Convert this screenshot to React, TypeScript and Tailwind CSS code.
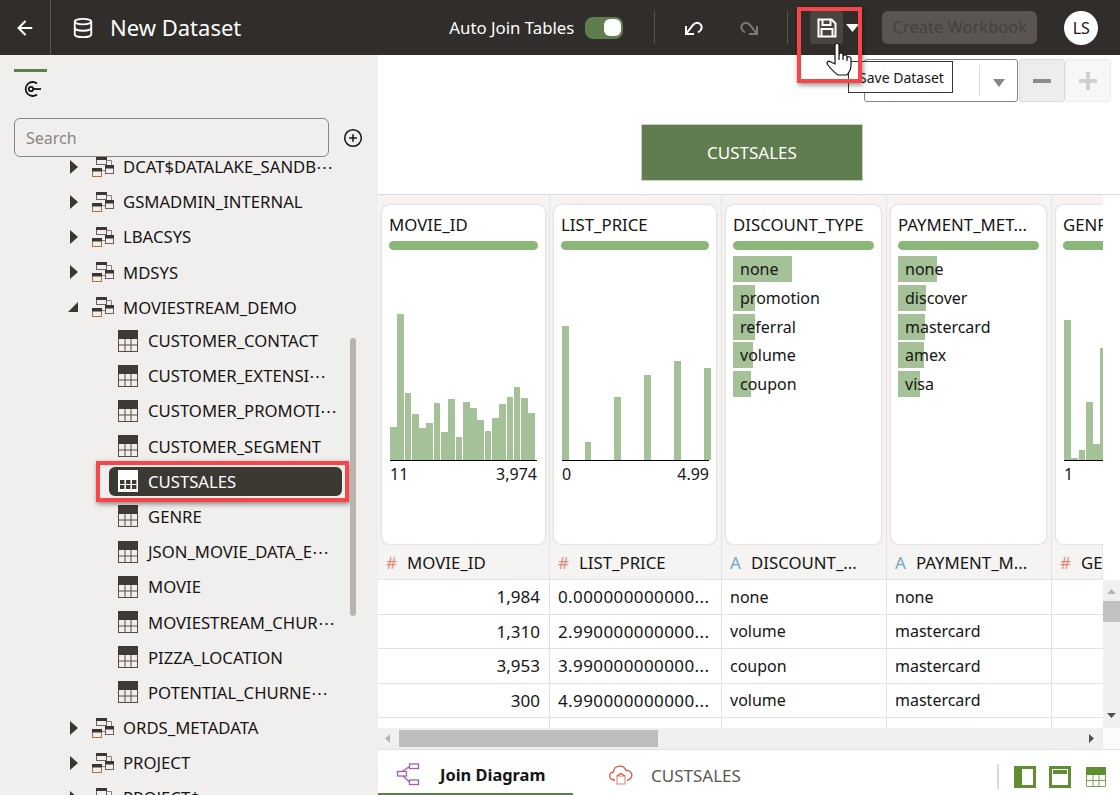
import { ArrowLeft, CirclePlus, Database } from 'lucide-react';

const cols = ['w-[172px]', 'w-[172px]', 'w-[165px]', 'w-[165px]', 'w-[51px]'];

const movieBars = [33, 146, 67, 46, 32, 37, 57, 28, 61, 23, 58, 52, 40, 29, 42, 56, 63, 73, 62, 47];
const priceBars = [134, 18, 63, 85, 99, 92];
const priceGaps = [0, 15.3, 22.6, 22.3, 22.6, 22.7];
const genreBars = [140, 2, 10, 58, 16, 112];

const discounts = [
  { label: 'none', w: 59 },
  { label: 'promotion', w: 22 },
  { label: 'referral', w: 22 },
  { label: 'volume', w: 20 },
  { label: 'coupon', w: 18 },
];
const payments = [
  { label: 'none', w: 39 },
  { label: 'discover', w: 28 },
  { label: 'mastercard', w: 27 },
  { label: 'amex', w: 26 },
  { label: 'visa', w: 22 },
];

const rows = [
  ['1,984', '0.000000000000...', 'none', 'none'],
  ['1,310', '2.990000000000...', 'volume', 'mastercard'],
  ['3,953', '3.990000000000...', 'coupon', 'mastercard'],
  ['300', '4.990000000000...', 'volume', 'mastercard'],
  ['', '', 'referral', 'none'],
];

function SchemaIcon() {
  return (
    <svg width="24" height="22" viewBox="0 0 24 22" className="shrink-0">
      <path d="M16 4.500h4.500V9" fill="none" stroke="#8a7f86" strokeWidth="1" />
      <rect x="5.500" y="1.500" width="10" height="7" fill="#f1efed" stroke="#6b5f66" />
      <rect x="5" y="1" width="11" height="3" fill="#3a3632" />
      <rect x="14.500" y="9.500" width="8" height="8" fill="#f1efed" stroke="#6b5f66" />
      <rect x="14" y="9" width="9" height="3.500" fill="#3a3632" />
      <rect x="1.500" y="12.500" width="9" height="8" fill="#f1efed" stroke="#a8743c" />
      <rect x="1" y="12" width="10" height="3.500" fill="#3a3632" />
      <path d="M11 14.500h3" stroke="#8a7f86" strokeWidth="1" />
    </svg>
  );
}

function TableIcon({ selected }: { selected?: boolean }) {
  const line = '#5a4a44';
  return (
    <svg width="20" height="22" viewBox="0 0 20 22" className="shrink-0">
      <rect x="0" y="0" width="20" height="22" fill={selected ? '#ffffff' : '#f1efed'} />
      {selected ? (
        <g fill="#3c3932">
          {[10, 15].map((y) =>
            [2, 8, 14].map((x) => <rect key={`${x}-${y}`} x={x} y={y} width="4.400" height="4" />),
          )}
        </g>
      ) : (
        <>
          <rect x="0.500" y="0.500" width="19" height="21" fill="none" stroke={line} />
          <rect x="0" y="0" width="20" height="9" fill="#3f3a36" />
          <path d="M0 15h20M7 9v13M13 9v13" stroke={line} strokeWidth="1" />
        </>
      )}
    </svg>
  );
}

function Caret({ open }: { open?: boolean }) {
  if (open) {
    return (
      <svg width="10" height="10" viewBox="0 0 10 10" className="shrink-0">
        <path d="M10 0v10H0z" fill="#3a3632" />
      </svg>
    );
  }
  return (
    <svg width="8" height="14" viewBox="0 0 8 14" className="shrink-0">
      <path d="M0 0l8 7-8 7z" fill="#3a3632" />
    </svg>
  );
}

function SchemaRow({ name, open }: { name: string; open?: boolean }) {
  return (
    <div className={`flex h-[35.2px] shrink-0 items-center text-[16.7px] text-[#161513] ${open ? '-mb-[2px]' : ''}`}>
      <div className="flex w-[91px] justify-end pr-[13px]">
        <Caret open={open} />
      </div>
      <SchemaIcon />
      <span className="ml-[8px] whitespace-nowrap">{name}</span>
    </div>
  );
}

function TableRow({ name, selected }: { name: string; selected?: boolean }) {
  if (selected) {
    return (
      <div className="relative ml-[109px] mr-[36px] flex h-[35.2px] shrink-0 items-center">
        <div className="flex h-[29px] w-full items-center rounded-md bg-[#3c3932] pl-[9px] text-[16.7px] text-white">
          <TableIcon selected />
          <span className="ml-[10px]">{name}</span>
        </div>
        <div className="absolute -left-[13px] -right-[7px] top-[-3px] bottom-[-3px] border-4 border-[#f84548] shadow-[1px_2px_5px_rgba(0,0,0,0.45)]" />
      </div>
    );
  }
  return (
    <div className="flex h-[35.2px] shrink-0 items-center pl-[118px] text-[16.7px] text-[#161513]">
      <TableIcon />
      <span className="ml-[10px] whitespace-nowrap">{name}</span>
    </div>
  );
}

function Sidebar() {
  return (
    <aside className="relative flex h-full w-[378px] shrink-0 flex-col overflow-hidden bg-[#f1efed]">
      <div className="ml-[14px] mt-[14px] h-[3px] w-[33px] shrink-0 bg-[#5f7d4f]" />
      <div className="ml-[22px] mt-[7px] h-[20px] shrink-0">
        <svg width="20" height="20" viewBox="0 0 20 20" fill="none" stroke="#161513" strokeWidth="1.800">
          <path d="M15 4.500a7 7 0 1 0 0 11" />
          <circle cx="9" cy="10" r="2.200" />
          <path d="M11 10h8" />
        </svg>
      </div>
      <div className="relative z-10 ml-[14px] mt-[19px] flex shrink-0 items-center">
        <div className="flex h-[39px] w-[315px] items-center rounded-md border border-[#8a8580] bg-[#f1efed] pl-[11px] text-[16px] text-[#8a8580]">
          Search
        </div>
        <CirclePlus className="ml-[14px] text-[#161513]" size={20} strokeWidth={1.800} />
      </div>
      <div className="-mt-[8px] flex shrink-0 flex-col">
        <SchemaRow name="DCAT$DATALAKE_SANDB⋯" />
        <SchemaRow name="GSMADMIN_INTERNAL" />
        <SchemaRow name="LBACSYS" />
        <SchemaRow name="MDSYS" />
        <SchemaRow name="MOVIESTREAM_DEMO" open />
        <TableRow name="CUSTOMER_CONTACT" />
        <TableRow name="CUSTOMER_EXTENSI⋯" />
        <TableRow name="CUSTOMER_PROMOTI⋯" />
        <TableRow name="CUSTOMER_SEGMENT" />
        <TableRow name="CUSTSALES" selected />
        <TableRow name="GENRE" />
        <TableRow name="JSON_MOVIE_DATA_E⋯" />
        <TableRow name="MOVIE" />
        <TableRow name="MOVIESTREAM_CHUR⋯" />
        <TableRow name="PIZZA_LOCATION" />
        <TableRow name="POTENTIAL_CHURNE⋯" />
        <SchemaRow name="ORDS_METADATA" />
        <SchemaRow name="PROJECT" />
        <SchemaRow name="PROJECT$" />
      </div>
      <div className="absolute left-[350px] top-[283px] h-[278px] w-[6px] rounded-full bg-[#b9b4ae]" />
    </aside>
  );
}

function UndoIcon({ className }: { className: string }) {
  return (
    <svg width="20" height="16" viewBox="0 0 20 16" fill="none" stroke="currentColor" strokeWidth="2" className={className}>
      <path d="M2 6v8h8" />
      <path d="M2 14L9 5c2.500-3 6-3 8 0 1.500 2.500.5 5.500-3 7.500" />
    </svg>
  );
}

function Header() {
  return (
    <header className="flex h-[55px] shrink-0 items-center bg-[#312d2a] text-white">
      <div className="flex h-full w-[51px] items-center justify-center border-r border-[#5a5551]">
        <ArrowLeft size={22} strokeWidth={2.200} />
      </div>
      <Database className="ml-[21px]" size={22} strokeWidth={2} />
      <span className="ml-[16px] text-[22px]">New Dataset</span>
      <span className="ml-[208px] text-[16.8px]">Auto Join Tables</span>
      <div className="ml-[11px] flex h-[22px] w-[38px] items-center justify-end rounded-lg bg-[#5f7d4f] pr-[2px]">
        <div className="h-[17px] w-[17px] rounded-md bg-white" />
      </div>
      <div className="ml-[31px] h-[33px] w-px bg-[#5a5551]" />
      <UndoIcon className="ml-[29px]" />
      <UndoIcon className="ml-[35px] -scale-x-100 text-[#7d7874]" />
      <div className="ml-[28px] h-[33px] w-px bg-[#5a5551]" />
      <div className="ml-[22px] flex h-[33px] w-[33px] items-center justify-center rounded-[3px] bg-[#4a4541]">
        <svg width="20" height="20" viewBox="0 0 20 20" fill="none" stroke="#ffffff" strokeWidth="2">
          <path d="M1.500 1.500h13l4 4v13h-17z" />
          <path d="M5.500 1.500v5.500h8V1.500" />
          <path d="M4.500 18.500v-7.500h11v7.500" />
        </svg>
      </div>
      <svg width="13" height="8" viewBox="0 0 13 8" className="ml-[3px]">
        <path d="M0 0h13L6.500 8z" fill="#ffffff" />
      </svg>
      <div className="ml-[23px] flex h-[33px] w-[155px] items-center justify-center rounded-md bg-[#5a5551] text-[16.5px] text-[#45413d]">
        Create Workbook
      </div>
      <div className="ml-[27px] flex h-[34px] w-[34px] items-center justify-center rounded-full bg-white text-[16px] text-[#161513]">
        LS
      </div>
    </header>
  );
}

function Canvas() {
  return (
    <div className="relative flex h-[140px] shrink-0 justify-center border-b border-[#dcdad8] bg-white pl-[6px] pt-[69px]">
      <div className="absolute left-[486px] top-[4px] flex h-[43px] w-[154px] justify-end rounded-[3px] border border-[#8a8580] bg-white">
        <div className="my-[5px] w-px bg-[#dcdad8]" />
        <div className="flex w-[37px] items-center justify-center pt-[4px]">
          <svg width="12" height="8" viewBox="0 0 12 8">
            <path d="M0 0h12L6 8z" fill="#8a8580" />
          </svg>
        </div>
      </div>
      <div className="absolute left-[641px] top-[4px] flex h-[43px] w-[46px] items-center justify-center rounded-[3px] border border-[#dcdad8] bg-[#ededed]">
        <div className="h-[4px] w-[18px] bg-[#8f8c88]" />
      </div>
      <div className="absolute left-[687px] top-[4px] flex h-[43px] w-[46px] items-center justify-center rounded-[3px] border border-[#ececec] bg-[#f7f7f7]">
        <svg width="18" height="18" viewBox="0 0 18 18">
          <path d="M7 0h4v7h7v4h-7v7H7v-7H0V7h7z" fill="#d2d0cd" />
        </svg>
      </div>
      <div className="flex h-[57px] w-[222px] items-center justify-center border border-[#c9d3c2] bg-[#5f7d4f] text-[17px] text-white">
        CUSTSALES
      </div>
    </div>
  );
}

function Bars({ values, gaps }: { values: number[]; gaps?: number[] }) {
  return (
    <div className="flex h-[146px] w-[147px] items-end gap-[0.6px] border-b border-black">
      {values.map((h, i) => (
        <div key={i} className="w-[6.7px] shrink-0 bg-[#a4c197]" style={{ height: h, marginLeft: gaps ? gaps[i] : 0 }} />
      ))}
    </div>
  );
}

function Card({ title, children, clipped }: { title: string; children: React.ReactNode; clipped?: boolean }) {
  return (
    <div className={`h-[339px] rounded-lg bg-white pl-[7px] pt-[8px] shadow-[0_0_3px_rgba(0,0,0,0.18)] ${clipped ? 'w-[60px]' : 'pr-[7px]'}`}>
      <div className="h-[24px] overflow-hidden whitespace-nowrap text-[16.8px] leading-[24px] text-[#161513]">{title}</div>
      <div className={`mt-[4px] h-[9px] rounded-full bg-[#8bb67a] ${clipped ? 'w-[100px]' : ''}`} />
      {children}
    </div>
  );
}

function Categories({ items }: { items: { label: string; w: number }[] }) {
  return (
    <div className="mt-[6px] flex flex-col gap-[2.8px]">
      {items.map((it) => (
        <div key={it.label} className="relative flex h-[26px] items-center pl-[7px] text-[16px] text-[#161513]">
          <div className="absolute bottom-0 left-0 top-0 bg-[#a4c197]" style={{ width: it.w }} />
          <span className="relative">{it.label}</span>
        </div>
      ))}
    </div>
  );
}

function Histogram({ values, min, max, gaps }: { values: number[]; min: string; max?: string; gaps?: number[] }) {
  return (
    <div className="ml-px mt-[65px]">
      <Bars values={values} gaps={gaps} />
      <div className="flex w-[147px] justify-between pt-[1px] text-[16px] leading-[24px] text-[#161513]">
        <span>{min}</span>
        <span>{max}</span>
      </div>
    </div>
  );
}

function Grid() {
  const headers = [
    { kind: '#', name: 'MOVIE_ID' },
    { kind: '#', name: 'LIST_PRICE' },
    { kind: 'A', name: 'DISCOUNT_...' },
    { kind: 'A', name: 'PAYMENT_M...' },
    { kind: '#', name: 'GE' },
  ];
  return (
    <div className="flex flex-1 flex-col overflow-hidden">
      <div className="flex h-[350px] shrink-0 bg-white">
        <div className={`${cols[0]} border-r border-[#e6e4e2] bg-[#f5f4f2] pl-[4px] pr-[4px] pt-[10px]`}>
          <Card title="MOVIE_ID">
            <Histogram values={movieBars} min="11" max="3,974" />
          </Card>
        </div>
        <div className={`${cols[1]} border-r border-[#e6e4e2] bg-[#f5f4f2] pl-[4px] pr-[5px] pt-[10px]`}>
          <Card title="LIST_PRICE">
            <Histogram values={priceBars} gaps={priceGaps} min="0" max="4.99" />
          </Card>
        </div>
        <div className={`${cols[2]} border-r border-[#e6e4e2] bg-[#f5f4f2] pl-[4px] pr-[5px] pt-[10px]`}>
          <Card title="DISCOUNT_TYPE">
            <Categories items={discounts} />
          </Card>
        </div>
        <div className={`${cols[3]} border-r border-[#e6e4e2] bg-[#f5f4f2] pl-[4px] pr-[5px] pt-[10px]`}>
          <Card title="PAYMENT_MET...">
            <Categories items={payments} />
          </Card>
        </div>
        <div className={`${cols[4]} overflow-hidden bg-[#f5f4f2] pl-[4px] pt-[10px]`}>
          <Card title="GENRE" clipped>
            <Histogram values={genreBars} min="1" />
          </Card>
        </div>
      </div>
      <div className="flex h-[35px] shrink-0 bg-white">
        {headers.map((h, i) => (
          <div
            key={h.name}
            className={`${cols[i]} flex items-center overflow-hidden whitespace-nowrap border-b border-r border-[#e6e4e2] bg-[#f5f4f2] pl-[8px] pt-px text-[16.8px] text-[#161513]`}
          >
            <span className={`w-[21px] shrink-0 text-[17px] ${h.kind === '#' ? 'text-[#e08a7a]' : 'text-[#6fa8c8]'}`}>{h.kind}</span>
            {h.name}
          </div>
        ))}
      </div>
      <div className="flex h-[148px] shrink-0">
        <div className="w-[725px] overflow-hidden bg-white">
          {rows.map((r, ri) => (
            <div key={ri} className="flex h-[34.5px] border-b border-[#e3e1df] text-[16px] text-[#161513]">
              <div className={`${cols[0]} flex items-center justify-end border-r border-[#e3e1df] pr-[9px] text-[17px]`}>{r[0]}</div>
              <div className={`${cols[1]} flex items-center whitespace-nowrap border-r border-[#e3e1df] pl-[8px] text-[17px] tracking-[0.4px]`}>{r[1]}</div>
              <div className={`${cols[2]} flex items-center border-r border-[#e3e1df] pl-[8px]`}>{r[2]}</div>
              <div className={`${cols[3]} flex items-center border-r border-[#e3e1df] pl-[8px]`}>{r[3]}</div>
              <div className={cols[4]} />
            </div>
          ))}
        </div>
        <div className="flex w-[17px] flex-col items-center bg-[#f0f0f0]">
          <svg width="9" height="5" viewBox="0 0 9 5" className="mt-[9px]">
            <path d="M0 5h9L4.500 0z" fill="#b5b5b5" />
          </svg>
          <div className="mt-[7px] h-[21px] w-full bg-[#c1c1c1]" />
          <svg width="9" height="5" viewBox="0 0 9 5" className="mt-[91px]">
            <path d="M0 0h9L4.500 5z" fill="#505050" />
          </svg>
        </div>
      </div>
      <div className="flex h-[21px] shrink-0">
        <div className="flex w-[725px] items-center bg-[#f0f0f0]">
          <svg width="5" height="9" viewBox="0 0 5 9" className="ml-[7px]">
            <path d="M5 0v9L0 4.500z" fill="#b5b5b5" />
          </svg>
          <div className="ml-[9px] h-[17px] w-[259px] bg-[#bdbdbd]" />
          <svg width="5" height="9" viewBox="0 0 5 9" className="ml-[431px]">
            <path d="M0 0v9l5-4.500z" fill="#505050" />
          </svg>
        </div>
        <div className="w-[17px] bg-[#fbfbfb]" />
      </div>
    </div>
  );
}

function Tabs() {
  return (
    <div className="flex h-[46px] shrink-0 items-stretch border-t border-[#e4e2e0] bg-white">
      <div className="flex w-[195px] items-center border-b-2 border-[#5f7d4f] pl-[18px] pt-[4px]">
        <svg width="24" height="24" viewBox="0 0 24 24" fill="none" stroke="#a05fb0" strokeWidth="1.300">
          <rect x="13.500" y="2" width="9" height="4.500" />
          <rect x="1.500" y="9.500" width="9" height="4.500" />
          <rect x="13.500" y="18" width="9" height="4.500" />
          <path d="M13.500 4.500L6 9.500M7 14l6.500 6" />
        </svg>
        <span className="ml-[20px] pt-[3px] text-[16.4px] font-bold text-[#161513]">Join Diagram</span>
      </div>
      <div className="flex items-center pl-[36px] pt-[4px]">
        <svg width="24" height="22" viewBox="0 0 24 22" fill="none" stroke="#d9533f" strokeWidth="1.300">
          <path d="M6 16H5a4 4 0 0 1-.6-8A6.500 6.500 0 0 1 17 6.500a4.800 4.800 0 0 1 2 9.500h-1" />
          <rect x="8" y="12" width="8" height="8" stroke="#e0a080" />
          <path d="M8 12l4-2.500 4 2.500" />
        </svg>
        <span className="ml-[18px] pt-[2px] text-[17px] text-[#5b5652]">CUSTSALES</span>
      </div>
      <div className="ml-auto flex items-center pr-[14px] pt-[8px]">
        <div className="h-[25px] w-[2px] bg-[#dcdad8]" />
        <svg width="22" height="22" viewBox="0 0 22 22" className="ml-[15px]">
          <rect width="22" height="22" fill="#5f8f30" />
          <rect x="8" y="3" width="11" height="16" fill="#ffffff" />
        </svg>
        <svg width="22" height="22" viewBox="0 0 22 22" className="ml-[13px]">
          <rect width="22" height="22" fill="#5f8f30" />
          <rect x="3" y="3" width="16" height="16" fill="#ffffff" />
          <rect x="4" y="4" width="14" height="4" fill="#5f8f30" />
        </svg>
        <svg width="20" height="20" viewBox="0 0 20 20" className="ml-[15px]">
          <rect width="20" height="20" fill="#ffffff" />
          <rect width="20" height="8" fill="#5f8f30" />
          <path d="M.5 8v11.500h19V8M0 13.500h20M7 8v12M13 8v12" fill="none" stroke="#7fa050" />
        </svg>
      </div>
    </div>
  );
}

export default function App() {
  return (
    <div className="relative flex h-[795px] w-[1120px] flex-col overflow-hidden bg-white font-['Noto_Sans','Open_Sans',sans-serif]">
      <Header />
      <div className="flex min-h-0 flex-1">
        <Sidebar />
        <main className="flex min-w-0 flex-1 flex-col">
          <Canvas />
          <Grid />
          <Tabs />
        </main>
      </div>
      <div className="absolute left-[848px] top-[61px] flex h-[32px] w-[105px] items-center border border-[#3a3632] bg-white pl-[10px] text-[14px] text-[#161513]">
        Save Dataset
      </div>
      <div className="absolute left-[797px] top-[7px] h-[76px] w-[65px] border-[4px] border-[#f84548] shadow-[1px_2px_5px_rgba(0,0,0,0.45)]" />
      <svg width="28" height="35" viewBox="0 0 28 35" className="absolute left-[826px] top-[42px]" fill="#ffffff" stroke="#161513" strokeWidth="1.200" strokeLinejoin="round">
        <path d="M9 22V3.500a2 2 0 0 1 4 0V13a2 2 0 0 1 4 0v2a2 2 0 0 1 4 0v1.500a2 2 0 0 1 4 .5v7c0 4-2 6.500-4 9H12C9 31 5 27 1.500 22.500a2 2 0 0 1 2.500-3z" />
        <path d="M13 13v5M17 15v3M21 16.500V19" fill="none" />
      </svg>
    </div>
  );
}
